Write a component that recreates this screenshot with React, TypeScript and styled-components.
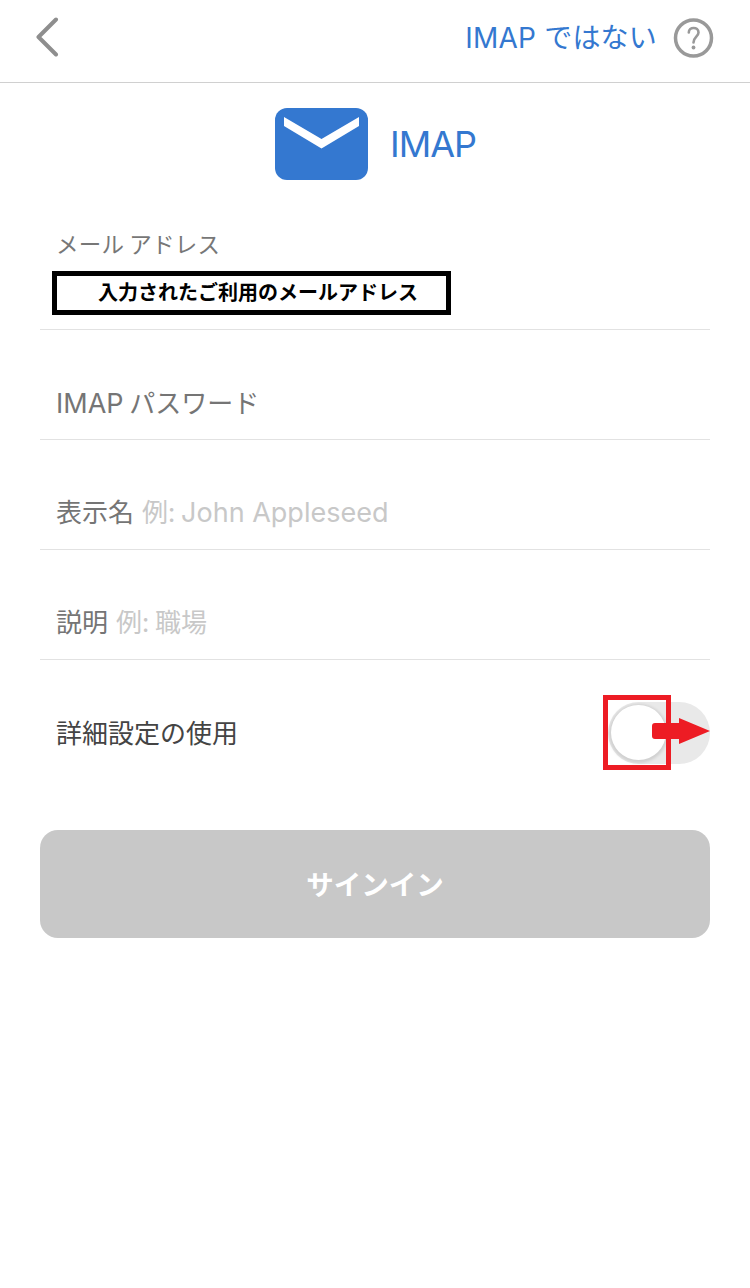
import React from 'react';
import styled, { createGlobalStyle } from 'styled-components';

const GlobalStyle = createGlobalStyle`
  html, body {
    margin: 0;
    padding: 0;
    background: #fff;
    font-family: 'Noto Sans CJK JP', 'Noto Sans', sans-serif;
  }
`;

const Page = styled.div`
  width: 750px;
  height: 1288px;
  overflow: hidden;
  background: #fff;
`;

const Header = styled.header`
  height: 82px;
  box-sizing: content-box;
  border-bottom: 1px solid #d0d0d0;
  display: flex;
  align-items: center;
  justify-content: space-between;
  padding: 0 35px 0 36px;
`;

const BackIcon = styled.svg`
  width: 24px;
  height: 42px;
  display: block;
  margin-top: -9px;
`;

const HeaderActions = styled.div`
  display: flex;
  align-items: center;
  gap: 16px;
  margin-top: -6px;
`;

const NotImap = styled.span`
  font-family: 'Inter', 'Noto Sans CJK JP', sans-serif;
  font-size: 28px;
  line-height: 40px;
  letter-spacing: 0.2px;
  color: #3478d0;
`;

const HelpIcon = styled.svg`
  width: 42px;
  height: 42px;
  display: block;
`;

const Brand = styled.div`
  display: flex;
  align-items: center;
  justify-content: center;
  gap: 22px;
  margin-top: 25px;
  padding-left: 1px;
  height: 72px;
`;

const MailLogo = styled.svg`
  width: 93px;
  height: 72px;
  display: block;
`;

const BrandName = styled.span`
  font-family: 'Inter', sans-serif;
  font-size: 36px;
  letter-spacing: -1px;
  color: #3478d0;
`;

const Form = styled.div`
  margin: 0 40px;
`;

const Field = styled.div<{ $top: number }>`
  height: 110px;
  box-sizing: border-box;
  border-bottom: 1px solid #e2e2e2;
  padding: ${p => p.$top}px 16px 0;
  font-size: 26px;
  line-height: 44px;
  color: #757575;
  white-space: nowrap;
`;

const EmailField = styled.div`
  margin-top: 41px;
  height: 109px;
  box-sizing: border-box;
  border-bottom: 1px solid #e2e2e2;
  padding: 5px 0 0 12px;
`;

const EmailLabel = styled.div`
  padding-left: 4px;
  font-size: 22.5px;
  line-height: 34px;
  letter-spacing: 0.2px;
  color: #777;
`;

const MaskedEmail = styled.div`
  margin-top: 11px;
  width: 399px;
  height: 44px;
  box-sizing: border-box;
  border: 5px solid #000;
  padding-left: 41px;
  font-size: 20px;
  font-weight: 700;
  line-height: 31px;
  color: #000;
  white-space: nowrap;
`;

const Placeholder = styled.span`
  margin-left: 8px;
  color: #c8c8c8;
`;

const LatinText = styled.span`
  font-family: 'Inter', 'Noto Sans CJK JP', sans-serif;
  font-size: 27px;
`;

const AdvancedRow = styled.div`
  position: relative;
  height: 146px;
  display: flex;
  align-items: center;
  justify-content: space-between;
  padding-left: 16px;
  box-sizing: border-box;
  font-size: 26px;
  color: #444;
`;

const AdvancedLabel = styled.span`
  margin-bottom: 4px;
`;

const Toggle = styled.div`
  position: relative;
  width: 102px;
  height: 62px;
  border-radius: 31px;
  background: #e9e9e9;
`;

const Knob = styled.div`
  position: absolute;
  left: 3px;
  top: 3px;
  width: 55px;
  height: 55px;
  border-radius: 50%;
  background: #fff;
  box-shadow: 0 1px 3px 2px rgba(0, 0, 0, 0.11);
`;

const Highlight = styled.div`
  position: absolute;
  left: 563px;
  top: 35px;
  width: 68px;
  height: 75px;
  box-sizing: border-box;
  border: 5px solid #ed1c24;
`;

const Arrow = styled.svg`
  position: absolute;
  left: 612px;
  top: 58px;
  width: 58px;
  height: 26px;
`;

const SignIn = styled.button`
  display: block;
  width: 100%;
  height: 108px;
  margin-top: 24px;
  padding: 0 0 2px;
  border: none;
  border-radius: 18px;
  background: #c8c8c8;
  color: #fff;
  font-family: inherit;
  font-size: 27.5px;
  font-weight: 700;
`;

export default function App() {
  return (
    <Page>
      <GlobalStyle />
      <Header>
        <BackIcon viewBox="0 0 24 42">
          <path d="M20 3.5 L2.5 21 L20 38.5" fill="none" stroke="#8e8e8e" strokeWidth="4" strokeLinecap="round" strokeLinejoin="round" />
        </BackIcon>
        <HeaderActions>
          <NotImap>IMAP ではない</NotImap>
          <HelpIcon viewBox="0 0 42 42">
            <circle cx="20.5" cy="21" r="18" fill="none" stroke="#999" strokeWidth="3.5" />
            <path d="M15.8 15.5 C15.8 9.5 25.5 9.5 25.5 15.5 C25.5 19.5 20.5 20 20.5 25.5" fill="none" stroke="#999" strokeWidth="2.6" strokeLinecap="round" />
            <circle cx="20.5" cy="30.5" r="1.9" fill="#999" />
          </HelpIcon>
        </HeaderActions>
      </Header>

      <Brand>
        <MailLogo viewBox="0 0 93 72">
          <rect width="93" height="72" rx="12" fill="#3478d0" />
          <path d="M9 9 L46.5 31 L84 9 V18 L46.5 40.5 L9 18 Z" fill="#fff" />
        </MailLogo>
        <BrandName>IMAP</BrandName>
      </Brand>

      <Form>
        <EmailField>
          <EmailLabel>メール アドレス</EmailLabel>
          <MaskedEmail>入力されたご利用のメールアドレス</MaskedEmail>
        </EmailField>
        <Field $top={50}>
          <LatinText>IMAP</LatinText> パスワード
        </Field>
        <Field $top={49}>
          表示名<Placeholder>例: <LatinText>John Appleseed</LatinText></Placeholder>
        </Field>
        <Field $top={49}>
          説明<Placeholder>例: 職場</Placeholder>
        </Field>
        <AdvancedRow>
          <AdvancedLabel>詳細設定の使用</AdvancedLabel>
          <Toggle>
            <Knob />
          </Toggle>
          <Highlight />
          <Arrow viewBox="0 0 58 26">
            <path d="M3 5 H27 V0 L58 13 L27 26 V21 H3 Q0 21 0 18 V8 Q0 5 3 5 Z" fill="#ed1c24" />
          </Arrow>
        </AdvancedRow>
        <SignIn>サインイン</SignIn>
      </Form>
    </Page>
  );
}
